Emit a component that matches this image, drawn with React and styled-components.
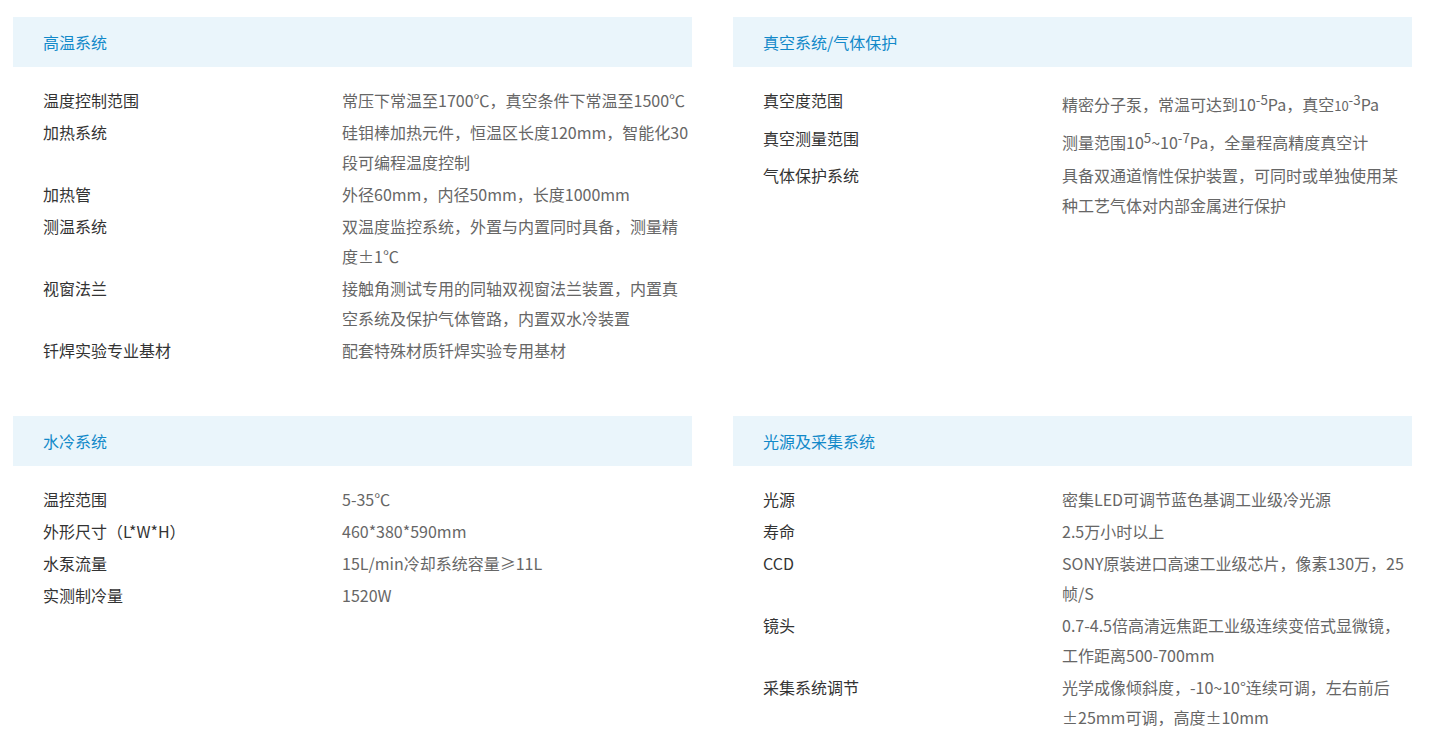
import React from "react";
import styled, { createGlobalStyle } from "styled-components";

const Global = createGlobalStyle`
  html, body { margin: 0; padding: 0; background: #fff; }
  body { font-family: "Noto Sans CJK SC", "Noto Sans", sans-serif; }
`;

const Page = styled.div`
  display: grid;
  grid-template-columns: 679px 679px;
  column-gap: 41px;
  row-gap: 33px;
  padding: 17px 0 0 13px;
  align-items: start;
`;

const Panel = styled.section`
  display: flex;
  flex-direction: column;
`;

const Header = styled.div`
  height: 50px;
  display: flex;
  align-items: center;
  padding-left: 30px;
  background: #eaf5fb;
  color: #1289c9;
  font-size: 16px;
`;

const Body = styled.div`
  display: grid;
  grid-template-columns: 299px 1fr;
  row-gap: 2px;
  padding: 18px 0 18px 30px;
  font-size: 16px;
  line-height: 30px;
`;

const Label = styled.div`
  color: #333;
`;

const Value = styled.div`
  color: #666;
  word-break: normal;
`;

const Small = styled.span`
  font-size: 13px;
`;

const sections = [
  {
    title: "高温系统",
    rows: [
      ["温度控制范围", "常压下常温至1700℃，真空条件下常温至1500℃"],
      ["加热系统", "硅钼棒加热元件，恒温区长度120mm，智能化30段可编程温度控制"],
      ["加热管", "外径60mm，内径50mm，长度1000mm"],
      ["测温系统", "双温度监控系统，外置与内置同时具备，测量精度±1℃"],
      ["视窗法兰", "接触角测试专用的同轴双视窗法兰装置，内置真空系统及保护气体管路，内置双水冷装置"],
      ["钎焊实验专业基材", "配套特殊材质钎焊实验专用基材"],
    ],
  },
  {
    title: "真空系统/气体保护",
    rows: [
      [
        "真空度范围",
        <>
          精密分子泵，常温可达到10<sup>-5</sup>Pa，真空<Small>10</Small>
          <sup>-3</sup>Pa
        </>,
      ],
      [
        "真空测量范围",
        <>
          测量范围10<sup>5</sup>~10<sup>-7</sup>Pa，全量程高精度真空计
        </>,
      ],
      ["气体保护系统", "具备双通道惰性保护装置，可同时或单独使用某种工艺气体对内部金属进行保护"],
    ],
  },
  {
    title: "水冷系统",
    rows: [
      ["温控范围", "5-35℃"],
      ["外形尺寸（L*W*H）", "460*380*590mm"],
      ["水泵流量", "15L/min冷却系统容量≥11L"],
      ["实测制冷量", "1520W"],
    ],
  },
  {
    title: "光源及采集系统",
    rows: [
      ["光源", "密集LED可调节蓝色基调工业级冷光源"],
      ["寿命", "2.5万小时以上"],
      ["CCD", "SONY原装进口高速工业级芯片，像素130万，25帧/S"],
      ["镜头", "0.7-4.5倍高清远焦距工业级连续变倍式显微镜，工作距离500-700mm"],
      ["采集系统调节", "光学成像倾斜度，-10~10°连续可调，左右前后±25mm可调，高度±10mm"],
    ],
  },
];

export default function App() {
  return (
    <>
      <Global />
      <Page>
        {sections.map((s) => (
          <Panel key={s.title}>
            <Header>{s.title}</Header>
            <Body>
              {s.rows.map(([k, v], i) => (
                <React.Fragment key={i}>
                  <Label>{k}</Label>
                  <Value>{v}</Value>
                </React.Fragment>
              ))}
            </Body>
          </Panel>
        ))}
      </Page>
    </>
  );
}
